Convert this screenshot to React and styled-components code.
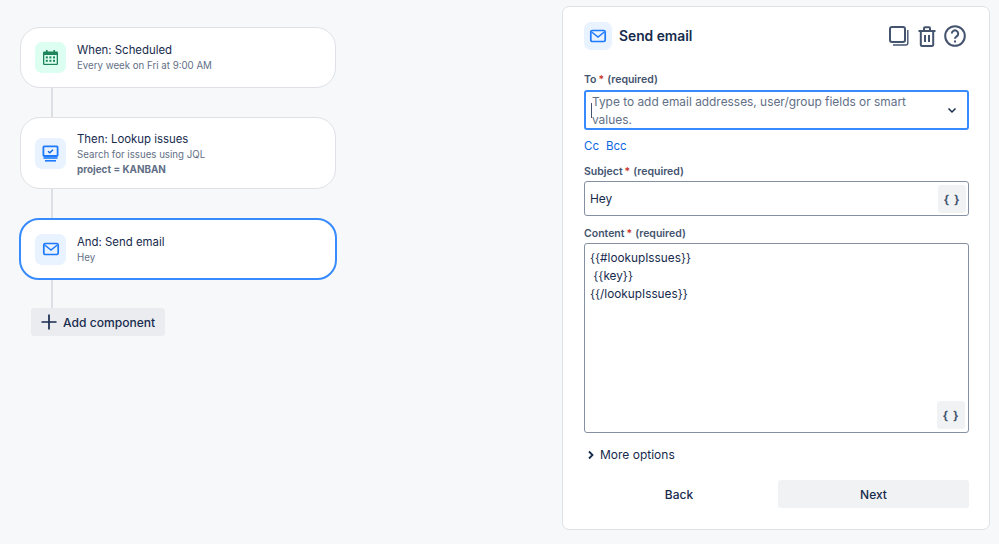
import React from 'react';
import styled, { createGlobalStyle } from 'styled-components';

const GlobalStyle = createGlobalStyle`
  html, body {
    margin: 0;
    padding: 0;
    background: #f7f8f9;
    font-family: "Inter", "Liberation Sans", sans-serif;
    color: #172b4d;
  }
  * { box-sizing: border-box; }
`;

const Page = styled.div`
  width: 999px;
  height: 544px;
  overflow: hidden;
  display: flex;
  justify-content: space-between;
  align-items: flex-start;
  padding: 6px 9px 0 20px;
`;

const Flow = styled.div`
  width: 316px;
  padding-top: 21px;
  display: flex;
  flex-direction: column;
`;

const Card = styled.div`
  height: ${p => p.$h}px;
  background: #fff;
  border-radius: 20px;
  border: 1px solid #dfe1e6;
  padding: 0 14px;
  display: flex;
  align-items: center;
  gap: 11px;
  ${p => p.$active && `
    border: 2px solid #388bff;
    margin: 0 -1px;
    padding: 0 14px;
  `}
`;

const Connector = styled.div`
  width: 2px;
  height: ${p => p.$h}px;
  margin-left: 31px;
  background: #dcdfe4;
`;

const IconTile = styled.div`
  flex: none;
  width: ${p => p.$size}px;
  height: ${p => p.$size}px;
  border-radius: 7px;
  background: ${p => p.$bg};
  display: flex;
  align-items: center;
  justify-content: center;
`;

const CardText = styled.div`
  display: flex;
  flex-direction: column;
`;

const CardTitle = styled.div`
  font-size: 11.4px;
  line-height: 16px;
  color: #172b4d;
`;

const CardSub = styled.div`
  font-size: 9.7px;
  line-height: 14px;
  margin-top: 1px;
  color: #626f86;
`;

const CardCode = styled.div`
  font-size: 9.9px;
  font-weight: 700;
  line-height: 14px;
  color: #626f86;
`;

const AddButton = styled.button`
  align-self: flex-start;
  margin-left: 11px;
  width: 134px;
  height: 28px;
  border: 0;
  border-radius: 3px;
  background: #ebecf0;
  display: flex;
  align-items: center;
  gap: 6px;
  padding: 0 0 0 10px;
  font: 500 12.1px "Inter", sans-serif;
  color: #172b4d;
`;

const Panel = styled.div`
  width: 428px;
  height: 524px;
  background: #fff;
  border: 1px solid #dfe1e6;
  border-radius: 7px;
  padding: 15px 20px 0 21px;
  display: flex;
  flex-direction: column;
`;

const PanelHeader = styled.div`
  display: flex;
  align-items: center;
  height: 28px;
  margin-bottom: 23px;
`;

const PanelTitle = styled.div`
  margin-left: 7px;
  font-size: 13.8px;
  font-weight: 600;
  color: #172b4d;
`;

const HeaderIcons = styled.div`
  margin-left: auto;
  margin-right: 3px;
  display: flex;
  align-items: center;
`;

const HeaderIconSlot = styled.span`
  display: flex;
  margin-left: ${p => p.$left || 0}px;
`;

const Label = styled.div`
  font-size: 10.5px;
  font-weight: 600;
  line-height: 14px;
  color: #44546f;
  margin-top: ${p => p.$top || 0}px;
  margin-bottom: ${p => p.$bottom}px;
`;

const Star = styled.span`
  color: #c9372c;
  margin: 0 3px 0 2px;
`;

const ToField = styled.div`
  position: relative;
  height: 40px;
  border: 2px solid #388bff;
  border-radius: 3px;
  padding: 1px 40px 0 6px;
  font-size: 11.9px;
  line-height: 17.5px;
  color: #626f86;
  display: flex;
  align-items: flex-start;
`;

const Caret = styled.span`
  position: absolute;
  left: 5px;
  top: 11px;
  width: 1px;
  height: 15px;
  background: #44546f;
`;

const ChevronSlot = styled.span`
  position: absolute;
  right: 9px;
  top: 12px;
  display: flex;
`;

const Links = styled.div`
  display: flex;
  gap: 7px;
  margin-top: 9px;
  font-size: 11.5px;
  line-height: 14px;
  color: #0c66e4;
`;

const Input = styled.div`
  position: relative;
  height: ${p => p.$h}px;
  border: 1px solid #8590a2;
  border-radius: 3px;
  padding: ${p => p.$multi ? '6px 5px' : '0 5px'};
  font-size: ${p => p.$multi ? 11.8 : 11.9}px;
  line-height: 17.8px;
  color: #172b4d;
  display: ${p => p.$multi ? 'block' : 'flex'};
  align-items: center;
  white-space: pre;
`;

const Braces = styled.span`
  position: absolute;
  right: ${p => p.$bottom ? 3 : 2}px;
  ${p => p.$bottom ? 'bottom: 3px;' : 'top: 3px;'}
  width: 28px;
  height: 28px;
  border-radius: 3px;
  background: #f1f2f4;
  display: flex;
  align-items: center;
  justify-content: center;
  font: 700 12px "Inter", sans-serif;
  letter-spacing: 1px;
  color: #44546f;
`;

const MoreRow = styled.div`
  display: flex;
  align-items: center;
  gap: 5px;
  margin-top: 15px;
  padding-left: 3px;
  font-size: 12px;
  line-height: 14px;
  color: #172b4d;
`;

const Actions = styled.div`
  display: grid;
  grid-template-columns: 190px 191px;
  gap: 4px;
  margin-top: 18px;
`;

const ActionButton = styled.button`
  height: 28px;
  border: 0;
  border-radius: 3px;
  background: ${p => p.$filled ? '#f1f2f4' : 'transparent'};
  font: 500 12px "Inter", sans-serif;
  color: #172b4d;
`;

const MailIcon = ({ size = 18 }) => (
  <svg width={size} height={size} viewBox="0 0 18 18" fill="none">
    <rect x="1.8" y="3.5" width="14.4" height="11" rx="1.6" stroke="#1d7afc" strokeWidth="1.7" />
    <path d="M2.7 5l6.3 5 6.3-5" stroke="#1d7afc" strokeWidth="1.5" />
  </svg>
);

const CalendarIcon = () => (
  <svg width="17" height="17" viewBox="0 0 17 17">
    <rect x="1" y="2.5" width="15" height="13.5" rx="1.2" fill="#1f845a" />
    <rect x="4" y="1" width="1.6" height="3" fill="#1f845a" />
    <rect x="11.4" y="1" width="1.6" height="3" fill="#1f845a" />
    <rect x="2.3" y="6" width="12.4" height="8.8" fill="#dcfff1" />
    {[3.8, 7.4, 11].map(x => [7.4, 10.8].map(y => (
      <rect key={`${x}-${y}`} x={x} y={y} width="2" height="2" fill="#1f845a" />
    )))}
  </svg>
);

const ScreenIcon = () => (
  <svg width="17" height="17" viewBox="0 0 17 17" fill="none">
    <rect x="1.4" y="1.4" width="14.2" height="9.6" rx="0.8" stroke="#1d7afc" strokeWidth="1.8" />
    <path d="M6 6.2l1.8 1.6 3.2-3" stroke="#0c66e4" strokeWidth="1.4" />
    <rect x="1.5" y="12.2" width="14" height="1.6" fill="#1d7afc" />
    <rect x="3" y="15" width="11" height="1.6" fill="#1d7afc" />
  </svg>
);

const PlusIcon = () => (
  <svg width="16" height="16" viewBox="0 0 16 16" fill="none">
    <path d="M8 0.5v15M0.5 8h15" stroke="#172b4d" strokeWidth="1.7" />
  </svg>
);

const CopyIcon = () => (
  <svg width="20" height="20" viewBox="0 0 20 20" fill="none" stroke="#44546f">
    <rect x="1" y="1" width="15" height="15" rx="2" strokeWidth="2" />
    <path d="M18.8 4v13a2 2 0 0 1-2 2H4" strokeWidth="1.4" />
  </svg>
);

const TrashIcon = () => (
  <svg width="18" height="21" viewBox="0 0 18 21" fill="none" stroke="#44546f" strokeWidth="2">
    <path d="M0.5 5h17" />
    <path d="M6 5V2.2a1 1 0 0 1 1-1h4a1 1 0 0 1 1 1V5" />
    <path d="M2.8 5v13.5a1.5 1.5 0 0 0 1.5 1.5h9.4a1.5 1.5 0 0 0 1.5-1.5V5" />
    <path d="M7 9v7M11 9v7" />
  </svg>
);

const HelpIcon = () => (
  <svg width="22" height="22" viewBox="0 0 22 22" fill="none" stroke="#44546f" strokeWidth="2">
    <circle cx="11" cy="11" r="9.8" />
    <path d="M7.8 8.6a3.2 3.2 0 1 1 4.9 2.7c-1.1.7-1.7 1.2-1.7 2.4" />
    <path d="M11 15.6v2" />
  </svg>
);

const ChevronDown = () => (
  <svg width="12" height="12" viewBox="0 0 12 12" fill="none">
    <path d="M2.5 4.5L6 8l3.5-3.5" stroke="#172b4d" strokeWidth="1.5" />
  </svg>
);

const ChevronRight = () => (
  <svg width="8" height="10" viewBox="0 0 8 10" fill="none">
    <path d="M2 1.5L5.5 5 2 8.5" stroke="#172b4d" strokeWidth="1.8" />
  </svg>
);

const FieldLabel = ({ name, top, bottom }) => (
  <Label $top={top} $bottom={bottom}>
    {name}<Star>*</Star>(required)
  </Label>
);

export default function App() {
  return (
    <>
      <GlobalStyle />
      <Page>
        <Flow>
          <Card $h={61}>
            <IconTile $size={31} $bg="#dcfff1"><CalendarIcon /></IconTile>
            <CardText>
              <CardTitle>When: Scheduled</CardTitle>
              <CardSub>Every week on Fri at 9:00 AM</CardSub>
            </CardText>
          </Card>
          <Connector $h={29} />
          <Card $h={72}>
            <IconTile $size={31} $bg="#e9f2ff"><ScreenIcon /></IconTile>
            <CardText>
              <CardTitle>Then: Lookup issues</CardTitle>
              <CardSub>Search for issues using JQL</CardSub>
              <CardCode>project = KANBAN</CardCode>
            </CardText>
          </Card>
          <Connector $h={29} />
          <Card $h={62} $active>
            <IconTile $size={31} $bg="#e9f2ff"><MailIcon /></IconTile>
            <CardText>
              <CardTitle>And: Send email</CardTitle>
              <CardSub>Hey</CardSub>
            </CardText>
          </Card>
          <Connector $h={28} />
          <AddButton><PlusIcon />Add component</AddButton>
        </Flow>
        <Panel>
          <PanelHeader>
            <IconTile $size={28} $bg="#e9f2ff"><MailIcon /></IconTile>
            <PanelTitle>Send email</PanelTitle>
            <HeaderIcons>
              <HeaderIconSlot><CopyIcon /></HeaderIconSlot>
              <HeaderIconSlot $left={9}><TrashIcon /></HeaderIconSlot>
              <HeaderIconSlot $left={8}><HelpIcon /></HeaderIconSlot>
            </HeaderIcons>
          </PanelHeader>
          <FieldLabel name="To" bottom={3} />
          <ToField>
            <Caret />
            <span>Type to add email addresses, user/group fields or smart values.</span>
            <ChevronSlot><ChevronDown /></ChevronSlot>
          </ToField>
          <Links><span>Cc</span><span>Bcc</span></Links>
          <FieldLabel name="Subject" top={12} bottom={2} />
          <Input $h={35}>Hey<Braces>{'{ }'}</Braces></Input>
          <FieldLabel name="Content" top={11} bottom={2} />
          <Input $h={190} $multi>
            {'{{#lookupIssues}}\n {{key}}\n{{/lookupIssues}}'}
            <Braces $bottom>{'{ }'}</Braces>
          </Input>
          <MoreRow><ChevronRight />More options</MoreRow>
          <Actions>
            <ActionButton>Back</ActionButton>
            <ActionButton $filled>Next</ActionButton>
          </Actions>
        </Panel>
      </Page>
    </>
  );
}
